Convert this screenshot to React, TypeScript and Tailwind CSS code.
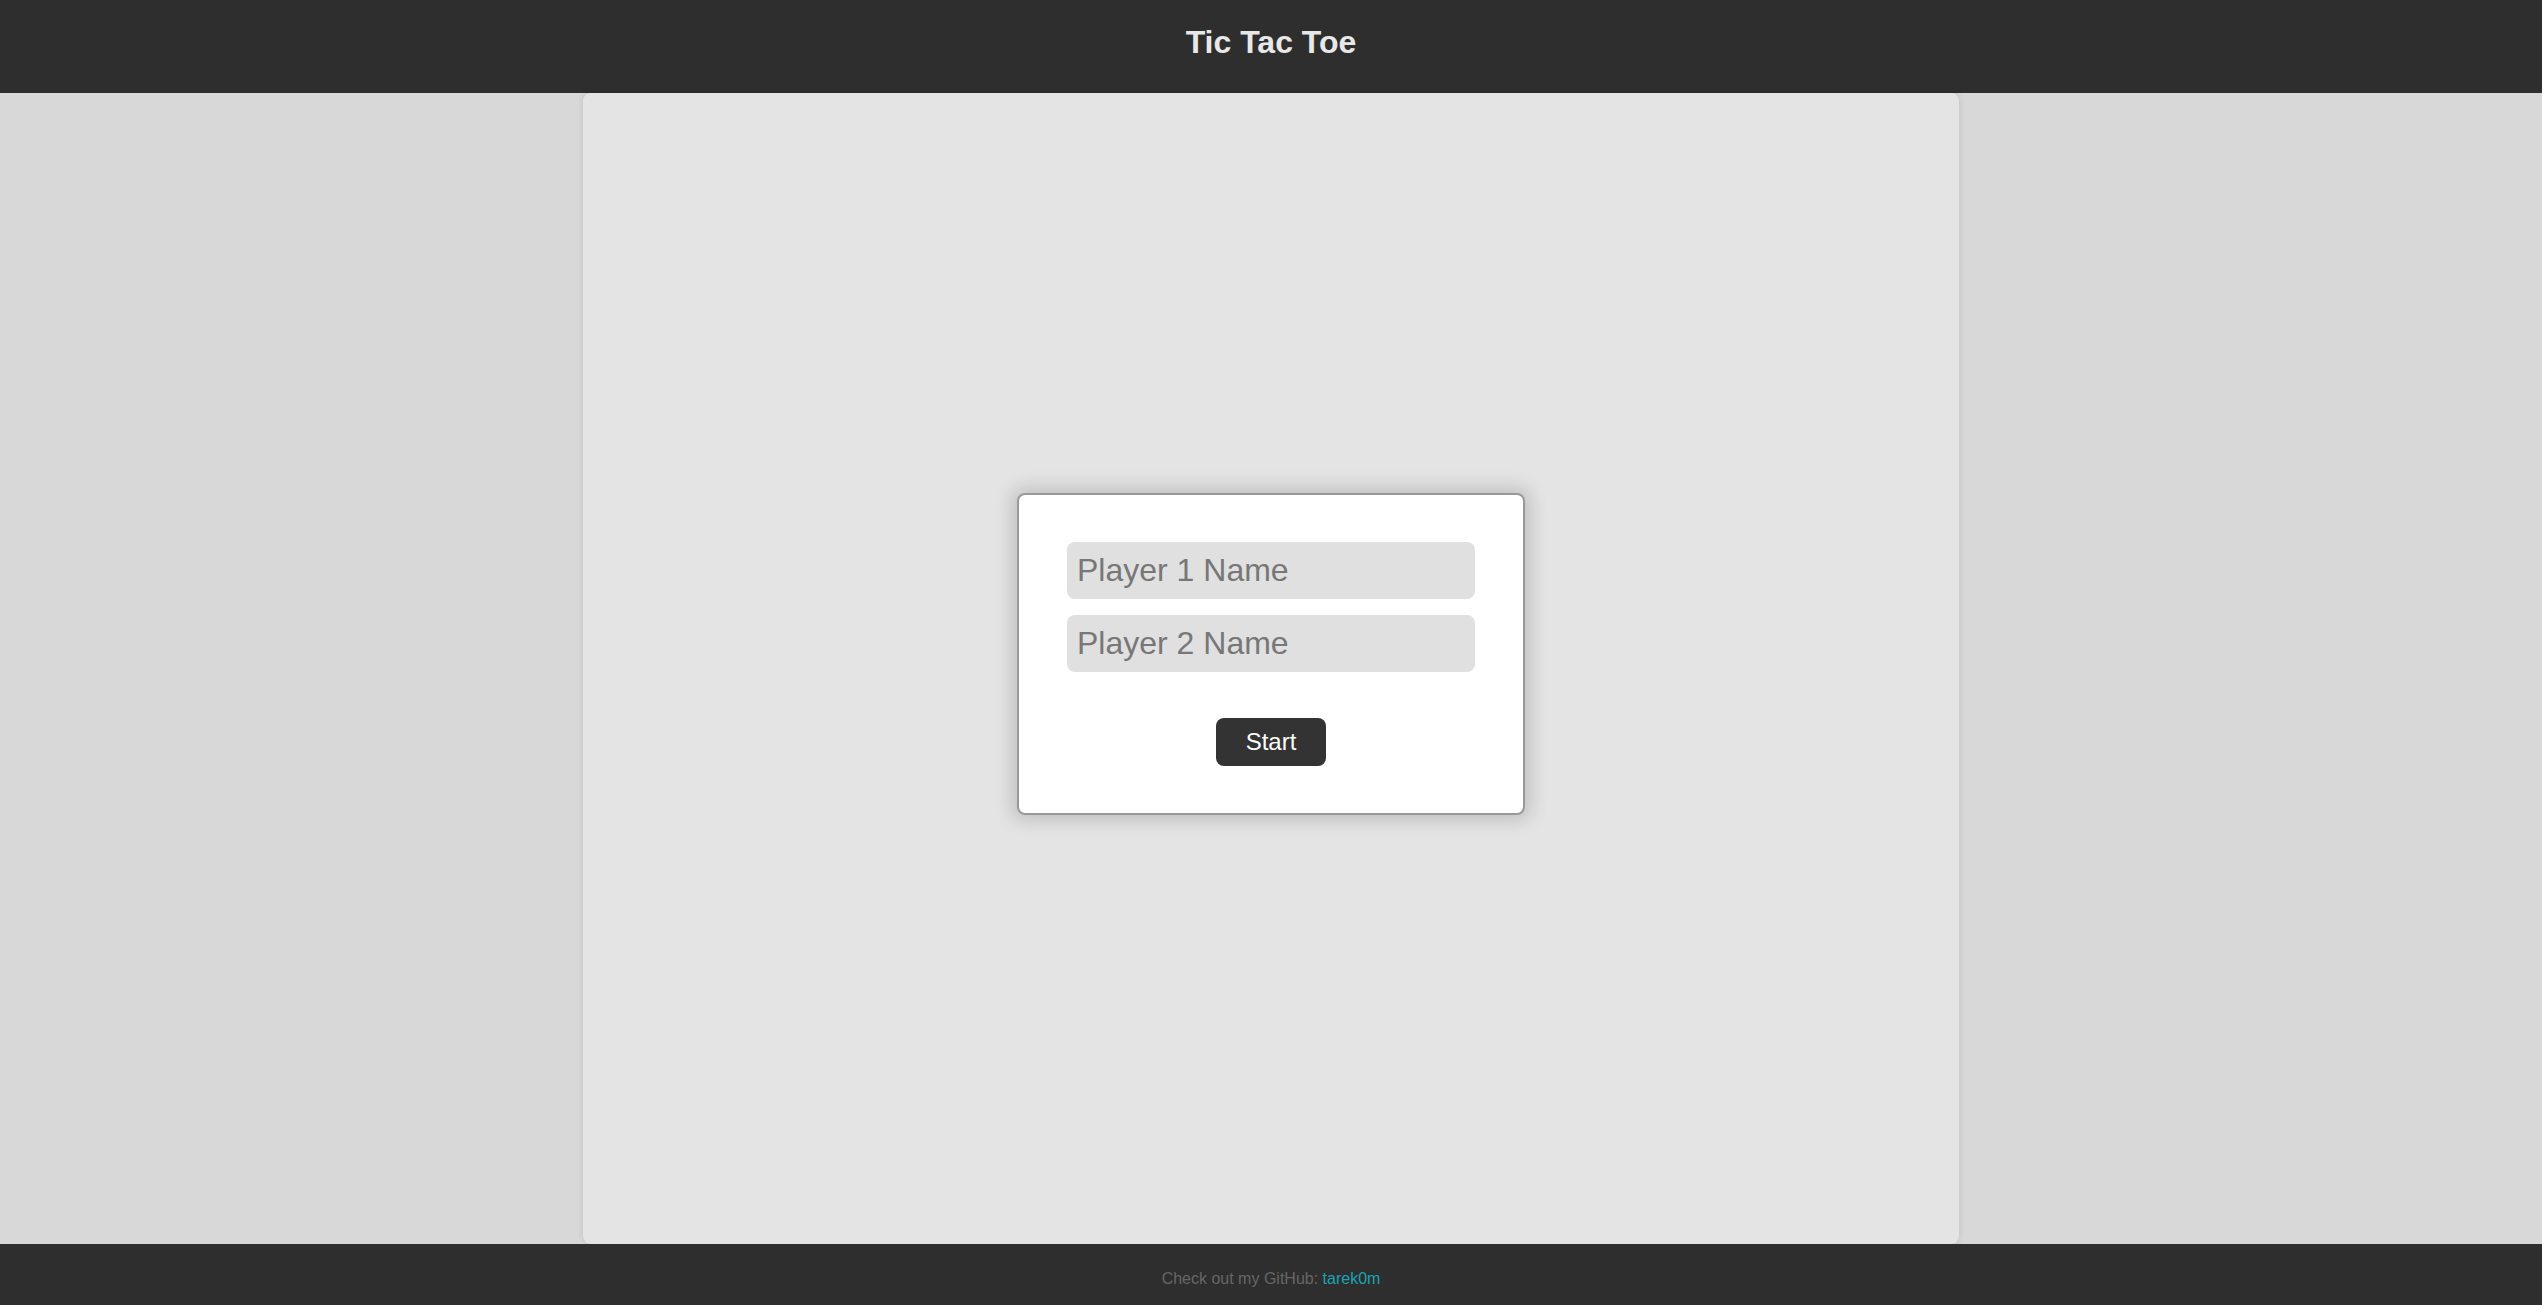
import React from "react";

export default function App() {
  return (
    <div
      className="flex min-h-screen flex-col bg-[#d8d8d8]"
      style={{ fontFamily: '"Liberation Sans", Arial, sans-serif' }}
    >
      <header className="flex h-[93px] shrink-0 items-center justify-center bg-[#2e2e2e] pb-[9px]">
        <h1 className="text-[32px] font-bold leading-none text-[#e8e8e8]">Tic Tac Toe</h1>
      </header>
      <main className="flex flex-1 justify-center">
        <div className="flex w-[1376px] items-center justify-center rounded-lg bg-[#e4e4e4] pb-[30px] shadow-[0_0_6px_rgba(0,0,0,0.12)]">
          <div className="flex w-[508px] flex-col rounded-lg border-2 border-[#999999] bg-white px-[48px] pb-[47px] pt-[47px] shadow-[0_0_18px_6px_rgba(0,0,0,0.15)]">
            <input
              placeholder="Player 1 Name"
              className="h-[57px] w-full rounded-lg bg-[#e0e0e0] px-[10px] text-[32px] text-[#333] outline-none placeholder:text-[#777777]"
            />
            <input
              placeholder="Player 2 Name"
              className="mt-[16px] h-[57px] w-full rounded-lg bg-[#e0e0e0] px-[10px] text-[32px] text-[#333] outline-none placeholder:text-[#777777]"
            />
            <button className="mx-auto mt-[46px] flex h-[48px] w-[110px] items-center justify-center rounded-lg bg-[#333333] text-[24px] text-white">
              Start
            </button>
          </div>
        </div>
      </main>
      <footer className="flex h-[61px] shrink-0 items-center justify-center bg-[#2e2e2e] pt-[9px] text-[16px] text-[#666666]">
        <span>
          Check out my GitHub:{" "}
          <a href="#" className="text-[#1aa3b5]">
            tarek0m
          </a>
        </span>
      </footer>
    </div>
  );
}
